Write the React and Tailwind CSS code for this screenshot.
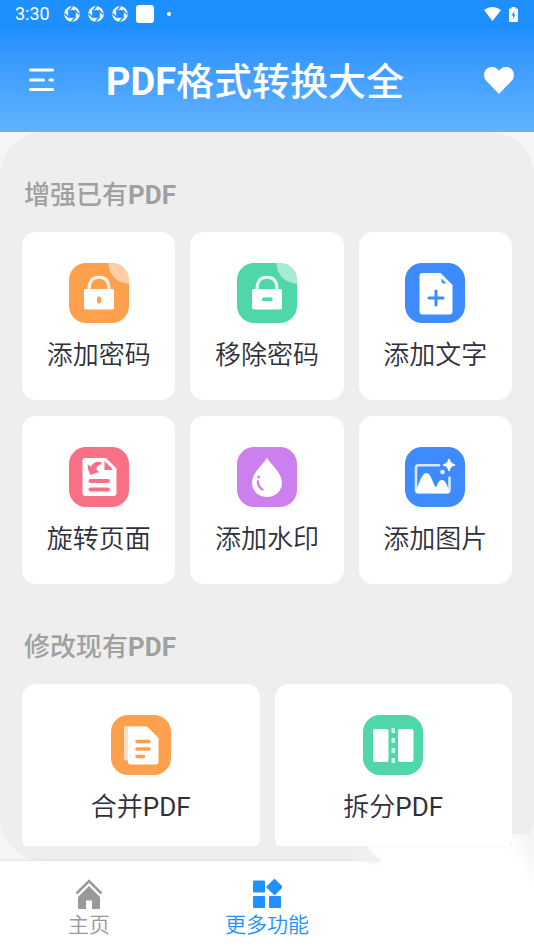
const tile = {
  orange: "#ffa04f",
  green: "#4fd6a9",
  blue: "#3d8bfd",
  red: "#f87085",
  purple: "#cc80ee",
};

function Tile({ color, children }) {
  return (
    <svg viewBox="0 0 60 60" className="size-[60px] shrink-0" aria-hidden="true">
      <rect width="60" height="60" rx="17" fill={tile[color]} />
      {children}
    </svg>
  );
}

function LockShape({ color, children }) {
  return (
    <Tile color={color}>
      <path d="M39.500 0 H43 A17 17 0 0 1 60 17 V20.500 C48 20.500 39.500 11 39.500 0Z" fill="#fff" fillOpacity=".5" />
      <path d="M20 26 C20 18 24 14.300 30 14.300 S40 18 40 26" fill="none" stroke="#fff" strokeOpacity=".85" strokeWidth="3" />
      <rect x="15" y="26" width="30" height="20.500" rx="2" fill="#fff" />
      {children}
    </Tile>
  );
}

const AddLock = () => (
  <LockShape color="orange">
    <rect x="28" y="33.500" width="4" height="7" rx="1.500" fill={tile.orange} />
  </LockShape>
);

const RemoveLock = () => (
  <LockShape color="green">
    <rect x="25" y="34.500" width="10.500" height="3.500" rx="1" fill={tile.green} />
  </LockShape>
);

const AddText = () => (
  <Tile color="blue">
    <path d="M17.500 10 H35.500 L47.500 22 V48.500 A3 3 0 0 1 44.500 51.500 H17.500 A3 3 0 0 1 14.500 48.500 V13 A3 3 0 0 1 17.500 10Z" fill="#fff" />
    <path d="M36.500 15.500 L41.500 20.500 H38.500 A2 2 0 0 1 36.500 18.500Z" fill={tile.blue} />
    <path d="M31 28 V42 M24 35 H38" stroke={tile.blue} strokeWidth="3" strokeLinecap="round" />
  </Tile>
);

const Rotate = () => (
  <Tile color="red">
    <path d="M16.500 11 H37 L47.500 21.500 V46 A3 3 0 0 1 44.500 49 H16.500 A3 3 0 0 1 13.500 46 V14 A3 3 0 0 1 16.500 11Z" fill="#fff" />
    <path d="M35.500 14 L43.500 22 V23 H35.500Z" fill={tile.red} />
    <path d="M18.500 17.500 L22 19.500 C24 15.500 27.500 14 32.500 15 V17.500 C29.500 17.500 27.500 20 27.500 22.500 L30 25 L21.500 28 Q18.500 23 18.500 17.500Z" fill={tile.red} />
    <path d="M21.500 34 H39 M21.500 42.500 H39" stroke={tile.red} strokeWidth="4" strokeLinecap="round" />
  </Tile>
);

const Drop = () => (
  <Tile color="purple">
    <path d="M30 10.500 C32 16 45 25 45 36 A15 14 0 0 1 15 36 C15 25 28 16 30 10.500Z" fill="#fff" />
    <path d="M21 34.500 C21 38.500 22.500 41 25.500 42.500" fill="none" stroke={tile.purple} strokeWidth="2.400" strokeLinecap="round" />
    <circle cx="21.700" cy="30" r="1.400" fill={tile.purple} />
  </Tile>
);

const AddImage = () => (
  <Tile color="blue">
    <path d="M34 18.300 H13.500 A2.500 2.500 0 0 0 11 20.800 V43 A2.500 2.500 0 0 0 13.500 45.500 H42 A2.500 2.500 0 0 0 44.500 43 V30.500" fill="none" stroke="#fff" strokeOpacity=".8" strokeWidth="2.600" strokeLinecap="round" />
    <path d="M11 44 C15 34 17 26 21.500 26 C26 26 27 35 31 40.500 C33 36 34 33 37 33 C41 33 42 39 44.500 44 V46 H11Z" fill="#fff" />
    <path d="M44 12.500 Q44.800 17.200 49.500 18 Q44.800 18.800 44 23.500 Q43.200 18.800 38.500 18 Q43.200 17.200 44 12.500Z" fill="#fff" stroke="#fff" strokeWidth="1.600" strokeLinejoin="round" />
    <circle cx="37.500" cy="25" r="2.300" fill="#fff" fillOpacity=".9" />
  </Tile>
);

const Merge = () => (
  <Tile color="orange">
    <path d="M15 11 H35 L40 16 V45.500 H15 A2 2 0 0 1 13 43.500 V13 A2 2 0 0 1 15 11Z" fill="#fff" fillOpacity=".65" />
    <path d="M19.500 12 H36.500 L47.500 23 V47 A2.500 2.500 0 0 1 45 49.500 H19.500 A2.500 2.500 0 0 1 17 47 V14.500 A2.500 2.500 0 0 1 19.500 12Z" fill="#fff" />
    <path d="M26 26.500 H38 M26 34 H38 M26 41.500 H32.500" stroke={tile.orange} strokeWidth="3.600" strokeLinecap="round" />
  </Tile>
);

const Split = () => (
  <Tile color="green">
    <rect x="10" y="14" width="15.500" height="33" rx="2" fill="#fff" />
    <rect x="35" y="14" width="15.500" height="33" rx="2" fill="#fff" />
    <path d="M30.300 13 V49" stroke="#fff" strokeOpacity=".75" strokeWidth="3.500" strokeDasharray="5 5" />
  </Tile>
);

const enhance = [
  { label: "添加密码", Icon: AddLock },
  { label: "移除密码", Icon: RemoveLock },
  { label: "添加文字", Icon: AddText },
  { label: "旋转页面", Icon: Rotate },
  { label: "添加水印", Icon: Drop },
  { label: "添加图片", Icon: AddImage },
];

const modify = [
  { label: "合并", suffix: "PDF", Icon: Merge },
  { label: "拆分", suffix: "PDF", Icon: Split },
];

function Section({ title, items, columns }) {
  return (
    <section>
      <h2 className="mb-[19px] px-0.5 text-[26px] leading-9 font-medium text-[#a0a0a0]">
        {title}
        <span className="font-bold">PDF</span>
      </h2>
      <div className={`grid gap-x-[15px] gap-y-4 ${columns}`}>
        {items.map(({ label, suffix, Icon }) => (
          <button
            key={label}
            type="button"
            className="flex h-[168px] flex-col items-center gap-3.5 rounded-[14px] bg-white pt-[31px] text-[26px] leading-9 font-[350] text-[#2f303b]"
          >
            <Icon />
            <span>
              {label}
              {suffix && <span className="font-normal">{suffix}</span>}
            </span>
          </button>
        ))}
      </div>
    </section>
  );
}

function Shutter() {
  return (
    <svg viewBox="0 0 16 16" className="size-4" fill="none" aria-hidden="true">
      <circle cx="8" cy="8" r="5.900" stroke="#fff" strokeWidth="3.800" />
      <path d="M8.500 .5 L4 5.500 M15.500 8.500 L10.500 4 M7.500 15.500 L12 10.500 M.5 7.500 L5.500 12" stroke="#2490ff" strokeWidth="1.500" />
    </svg>
  );
}

function StatusBar() {
  return (
    <div className="flex h-7 items-center px-[15px] text-white">
      <span className="text-lg leading-7">3:30</span>
      <div className="ml-[14px] flex items-center gap-2">
        <Shutter />
        <Shutter />
        <Shutter />
        <span className="size-[18px] rounded-[3px] bg-white" />
      </div>
      <span className="ml-[13px] size-1 rounded-full bg-white" />
      <div className="ml-auto flex items-center gap-2">
        <svg viewBox="0 0 17 14" className="h-[14px] w-[17px]" aria-hidden="true">
          <path d="M0 3 Q8.500 -3 17 3 L8.500 14Z" fill="#fff" />
        </svg>
        <svg viewBox="0 0 9 15" className="mr-[1px] h-[15px] w-[9px]" aria-hidden="true">
          <path d="M2.500 0 H6.500 V1.500 H8 Q9 1.500 9 2.500 V14 Q9 15 8 15 H1 Q0 15 0 14 V2.500 Q0 1.500 1 1.500 H2.500Z" fill="#fff" />
          <path d="M5.500 3.500 L2.500 8.500 H4.200 L3.600 12.500 L6.600 7.400 H4.900Z" fill="#2490ff" />
        </svg>
      </div>
    </div>
  );
}

export default function App() {
  return (
    <div className="relative flex h-screen flex-col overflow-hidden bg-[#f6f6f9] font-['Roboto','Noto_Sans_CJK_SC',sans-serif]">
      <header className="h-[132px] shrink-0 bg-linear-to-b from-[#1e8fff] from-20% to-[#62b2ff]">
        <StatusBar />
        <div className="flex h-[104px] items-center pr-5 pl-[28px] text-white">
          <button type="button" aria-label="菜单" className="mr-[51px]">
            <svg viewBox="0 0 27 24" className="h-6 w-[27px]" fill="none" stroke="#fff" strokeWidth="3" strokeLinecap="round">
              <path d="M2.500 2 H24.500 M2.500 12 H15.500 M22 12 H24.500 M2.500 21.500 H24.500" />
            </svg>
          </button>
          <h1 className="flex-1 pt-[3px] text-[38px] leading-[56px] font-medium whitespace-nowrap">
            <span className="font-bold">PDF</span>格式转换大全
          </h1>
          <button type="button" aria-label="收藏">
            <svg viewBox="0 0 30 27" className="h-[27px] w-[30px]">
              <path d="M15 27 L3 14.500 A8.300 8.300 0 0 1 0 8.300 C0 3.500 3.500 0 8 0 C11 0 13.500 1.500 15 3.800 C16.500 1.500 19 0 22 0 C26.500 0 30 3.500 30 8.300 A8.300 8.300 0 0 1 27 14.500Z" fill="#fff" />
            </svg>
          </button>
        </div>
      </header>

      <main className="flex min-h-0 flex-1 flex-col rounded-[44px] bg-[#eeeeee] pb-[15px]">
        <div className="flex min-h-0 flex-1 flex-col gap-[45px] overflow-hidden px-[22px] pt-[45px]">
          <Section title="增强已有" items={enhance} columns="grid-cols-3" />
          <Section title="修改现有" items={modify} columns="grid-cols-2" />
        </div>
      </main>

      <nav className="grid h-[89px] shrink-0 grid-cols-3 bg-white text-[21px] leading-7 font-[350] shadow-[0_-1px_3px_rgba(0,0,0,0.08)]">
        <a href="#home" className="flex flex-col items-center gap-0.5 pt-[18px] text-[#999999]">
          <svg viewBox="0 0 28 30" className="h-[30px] w-7" aria-hidden="true">
            <path d="M1.500 14.500 L14 2 L26.500 14.500" fill="none" stroke="currentColor" strokeWidth="2.600" />
            <path d="M14 7 L25 18 V29 Q25 30 24 30 H17 V21.500 H11 V30 H4 Q3 30 3 29 V18Z" fill="currentColor" />
          </svg>
          主页
        </a>
        <a href="#more" aria-current="page" className="flex flex-col items-center gap-0.5 pt-[18px] text-[#2390ff]">
          <svg viewBox="0 0 30 30" className="size-[30px]" fill="currentColor" aria-hidden="true">
            <rect x="1" y="1.500" width="12" height="12" rx="1" />
            <rect x="1" y="17" width="12" height="12" rx="1" />
            <rect x="17" y="17" width="12" height="12" rx="1" />
            <rect x="16.500" y="2" width="12" height="12" rx="1" transform="rotate(45 22.500 8)" />
          </svg>
          更多功能
        </a>
      </nav>

      <svg viewBox="0 0 184 130" className="pointer-events-none absolute right-0 bottom-0 h-[130px] w-[184px]" aria-hidden="true">
        <defs>
          <filter id="soften" x="-20%" y="-20%" width="140%" height="140%">
            <feGaussianBlur stdDeviation="1.500" />
          </filter>
          <linearGradient id="edge" gradientUnits="userSpaceOnUse" x1="190" y1="16" x2="160" y2="34">
            <stop offset="0" stopColor="#f0f0f0" />
            <stop offset="1" stopColor="#fff" />
          </linearGradient>
          <linearGradient id="fade" x1="0" y1="0" x2="0" y2="1">
            <stop offset="0" stopColor="#fff" stopOpacity="0" />
            <stop offset="1" stopColor="#fff" />
          </linearGradient>
        </defs>
        <path d="M8 42 V60 H40 L32 44Z" fill="#fff" filter="url(#soften)" />
        <path d="M4 29 H18 L31 44 L4 40Z" fill="#f0f0f0" filter="url(#soften)" />
        <path d="M16 26 H161 V136 H34 V44Z" fill="#fff" filter="url(#soften)" />
        <path d="M162 14 H184 V130 H155 V26 H162Z" fill="url(#edge)" />
        <path d="M150 40 H184 V130 H150Z" fill="url(#fade)" />
      </svg>
    </div>
  );
}
